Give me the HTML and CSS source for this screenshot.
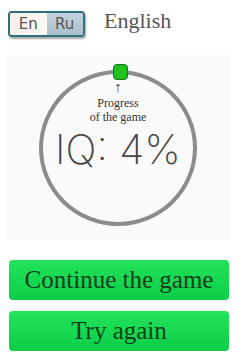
FILE: index.html
```html
<!DOCTYPE html>
<html lang="en">
<head>
    <meta charset="UTF-8">
    <meta name="viewport" content="width=device-width, initial-scale=1.0">
    <title>IQ Game</title>
    <link rel="stylesheet" href="styles.css">
</head>
<body>
    <header class="top">
        <div class="lang-toggle">
            <span class="lang lang-en">En</span>
            <span class="lang lang-ru">Ru</span>
        </div>
        <div class="lang-name">English</div>
    </header>

    <main class="board">
        <div class="ring">
            <div class="marker"></div>
            <div class="hint">
                <div class="arrow">&uarr;</div>
                <div>Progress</div>
                <div>of the game</div>
            </div>
            <div class="score">IQ: 4%</div>
        </div>
    </main>

    <div class="actions">
        <button class="btn">Continue the game</button>
        <button class="btn">Try again</button>
    </div>
</body>
</html>
```

FILE: styles.css
```css
body { margin: 0; background: #fff; font-family: "Liberation Serif", serif; width: 240px; height: 360px; overflow: hidden; }
.top { display: flex; align-items: center; height: 40px; padding: 7px 0 0 8px; box-sizing: border-box; }
.lang-toggle { display: flex; width: 77px; height: 26px; box-sizing: border-box; border: 2px solid #2f6f7a; border-radius: 4px; overflow: hidden; box-shadow: 1px 2px 2px rgba(0,0,0,0.35); }
.lang { flex: 1; display: flex; align-items: center; justify-content: center; font-family: "DejaVu Sans", sans-serif; font-size: 15px; color: #555; }
.lang-en { background: linear-gradient(to right, #f6eee8, #fbf8f4); }
.lang-ru { background: linear-gradient(to bottom, #c4d4dc, #a9bfca); }
.lang-name { margin-left: 19px; font-size: 22px; color: #555; margin-top: -6px; }
.board { background: #fafafa; margin: 15px 10px 0 6px; height: 185px; display: flex; justify-content: center; padding-top: 15px; box-sizing: border-box; }
.ring { position: relative; width: 158px; height: 156px; box-sizing: border-box; border: 4px solid #8c8c8c; border-radius: 50%; display: flex; flex-direction: column; align-items: center; }
.marker { position: absolute; top: -10px; left: 70px; width: 13px; height: 14px; background: #1ec21e; border: 1px solid #157015; border-radius: 4px; }
.hint { margin-top: 5px; font-size: 12px; line-height: 14px; color: #333; text-align: center; }
.arrow { font-size: 15px; line-height: 17px; color: #444; }
.score { margin-top: 0; font-family: "Inter", sans-serif; font-weight: 200; font-size: 41px; color: #444; }
.actions { display: flex; flex-direction: column; gap: 11px; padding: 20px 11px 0 9px; }
.btn { height: 40px; border: none; border-radius: 4px; background: linear-gradient(to bottom, #22e35a, #0ccd48); font-family: "Liberation Serif", serif; font-size: 25px; color: #0d3d1b; }
```
